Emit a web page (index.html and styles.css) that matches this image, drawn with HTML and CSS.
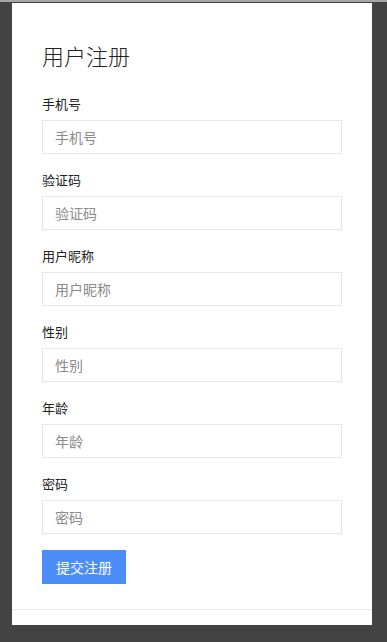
FILE: index.html
```html
<!DOCTYPE html>
<html lang="zh-CN">
<head>
    <meta charset="UTF-8">
    <meta name="viewport" content="width=device-width, initial-scale=1.0">
    <title>用户注册</title>
    <link rel="stylesheet" href="styles.css">
</head>
<body>
    <div class="page">
        <div class="card">
            <form class="register-form" id="registerForm">
                <h1 class="title">用户注册</h1>

                <div class="field">
                    <label for="phone">手机号</label>
                    <input type="text" id="phone" name="phone" placeholder="手机号">
                </div>

                <div class="field">
                    <label for="code">验证码</label>
                    <input type="text" id="code" name="code" placeholder="验证码">
                </div>

                <div class="field">
                    <label for="nickname">用户昵称</label>
                    <input type="text" id="nickname" name="nickname" placeholder="用户昵称">
                </div>

                <div class="field">
                    <label for="gender">性别</label>
                    <input type="text" id="gender" name="gender" placeholder="性别">
                </div>

                <div class="field">
                    <label for="age">年龄</label>
                    <input type="text" id="age" name="age" placeholder="年龄">
                </div>

                <div class="field">
                    <label for="password">密码</label>
                    <input type="password" id="password" name="password" placeholder="密码">
                </div>

                <button type="submit" class="submit-btn">提交注册</button>
            </form>
            <div class="card-footer"></div>
        </div>
    </div>
</body>
</html>
```

FILE: styles.css
```css
* {
    box-sizing: border-box;
}

html, body {
    margin: 0;
    padding: 0;
    height: 100%;
}

body {
    background-color: #434343;
    border-top: 2px solid #a6a6a6;
    font-family: "Noto Sans CJK SC", "Noto Sans", sans-serif;
    color: #333;
}

.page {
    padding: 1px 15px 0 12px;
}

.card {
    background-color: #fff;
    width: 360px;
}

.register-form {
    padding: 37px 30px 25px;
}

.title {
    margin: 0 0 24px;
    font-size: 22px;
    line-height: 30px;
    font-weight: 300;
    color: #222;
}

.field {
    margin-bottom: 16px;
}

.field label {
    display: block;
    font-size: 13px;
    line-height: 20px;
    margin-bottom: 6px;
    color: #222;
}

.field input {
    display: block;
    width: 300px;
    height: 34px;
    padding: 0 12px;
    border: 1px solid #e6e6e6;
    border-radius: 0;
    font-family: inherit;
    font-size: 14px;
    color: #333;
    outline: none;
}

.field input::placeholder {
    color: #8a8a8a;
}

.submit-btn {
    display: block;
    width: 84px;
    height: 34px;
    padding: 0;
    border: none;
    background-color: #4b8ef9;
    color: #fff;
    font-family: inherit;
    font-size: 14px;
    cursor: pointer;
}

.card-footer {
    border-top: 1px solid #e8e8e8;
    height: 16px;
}
```
